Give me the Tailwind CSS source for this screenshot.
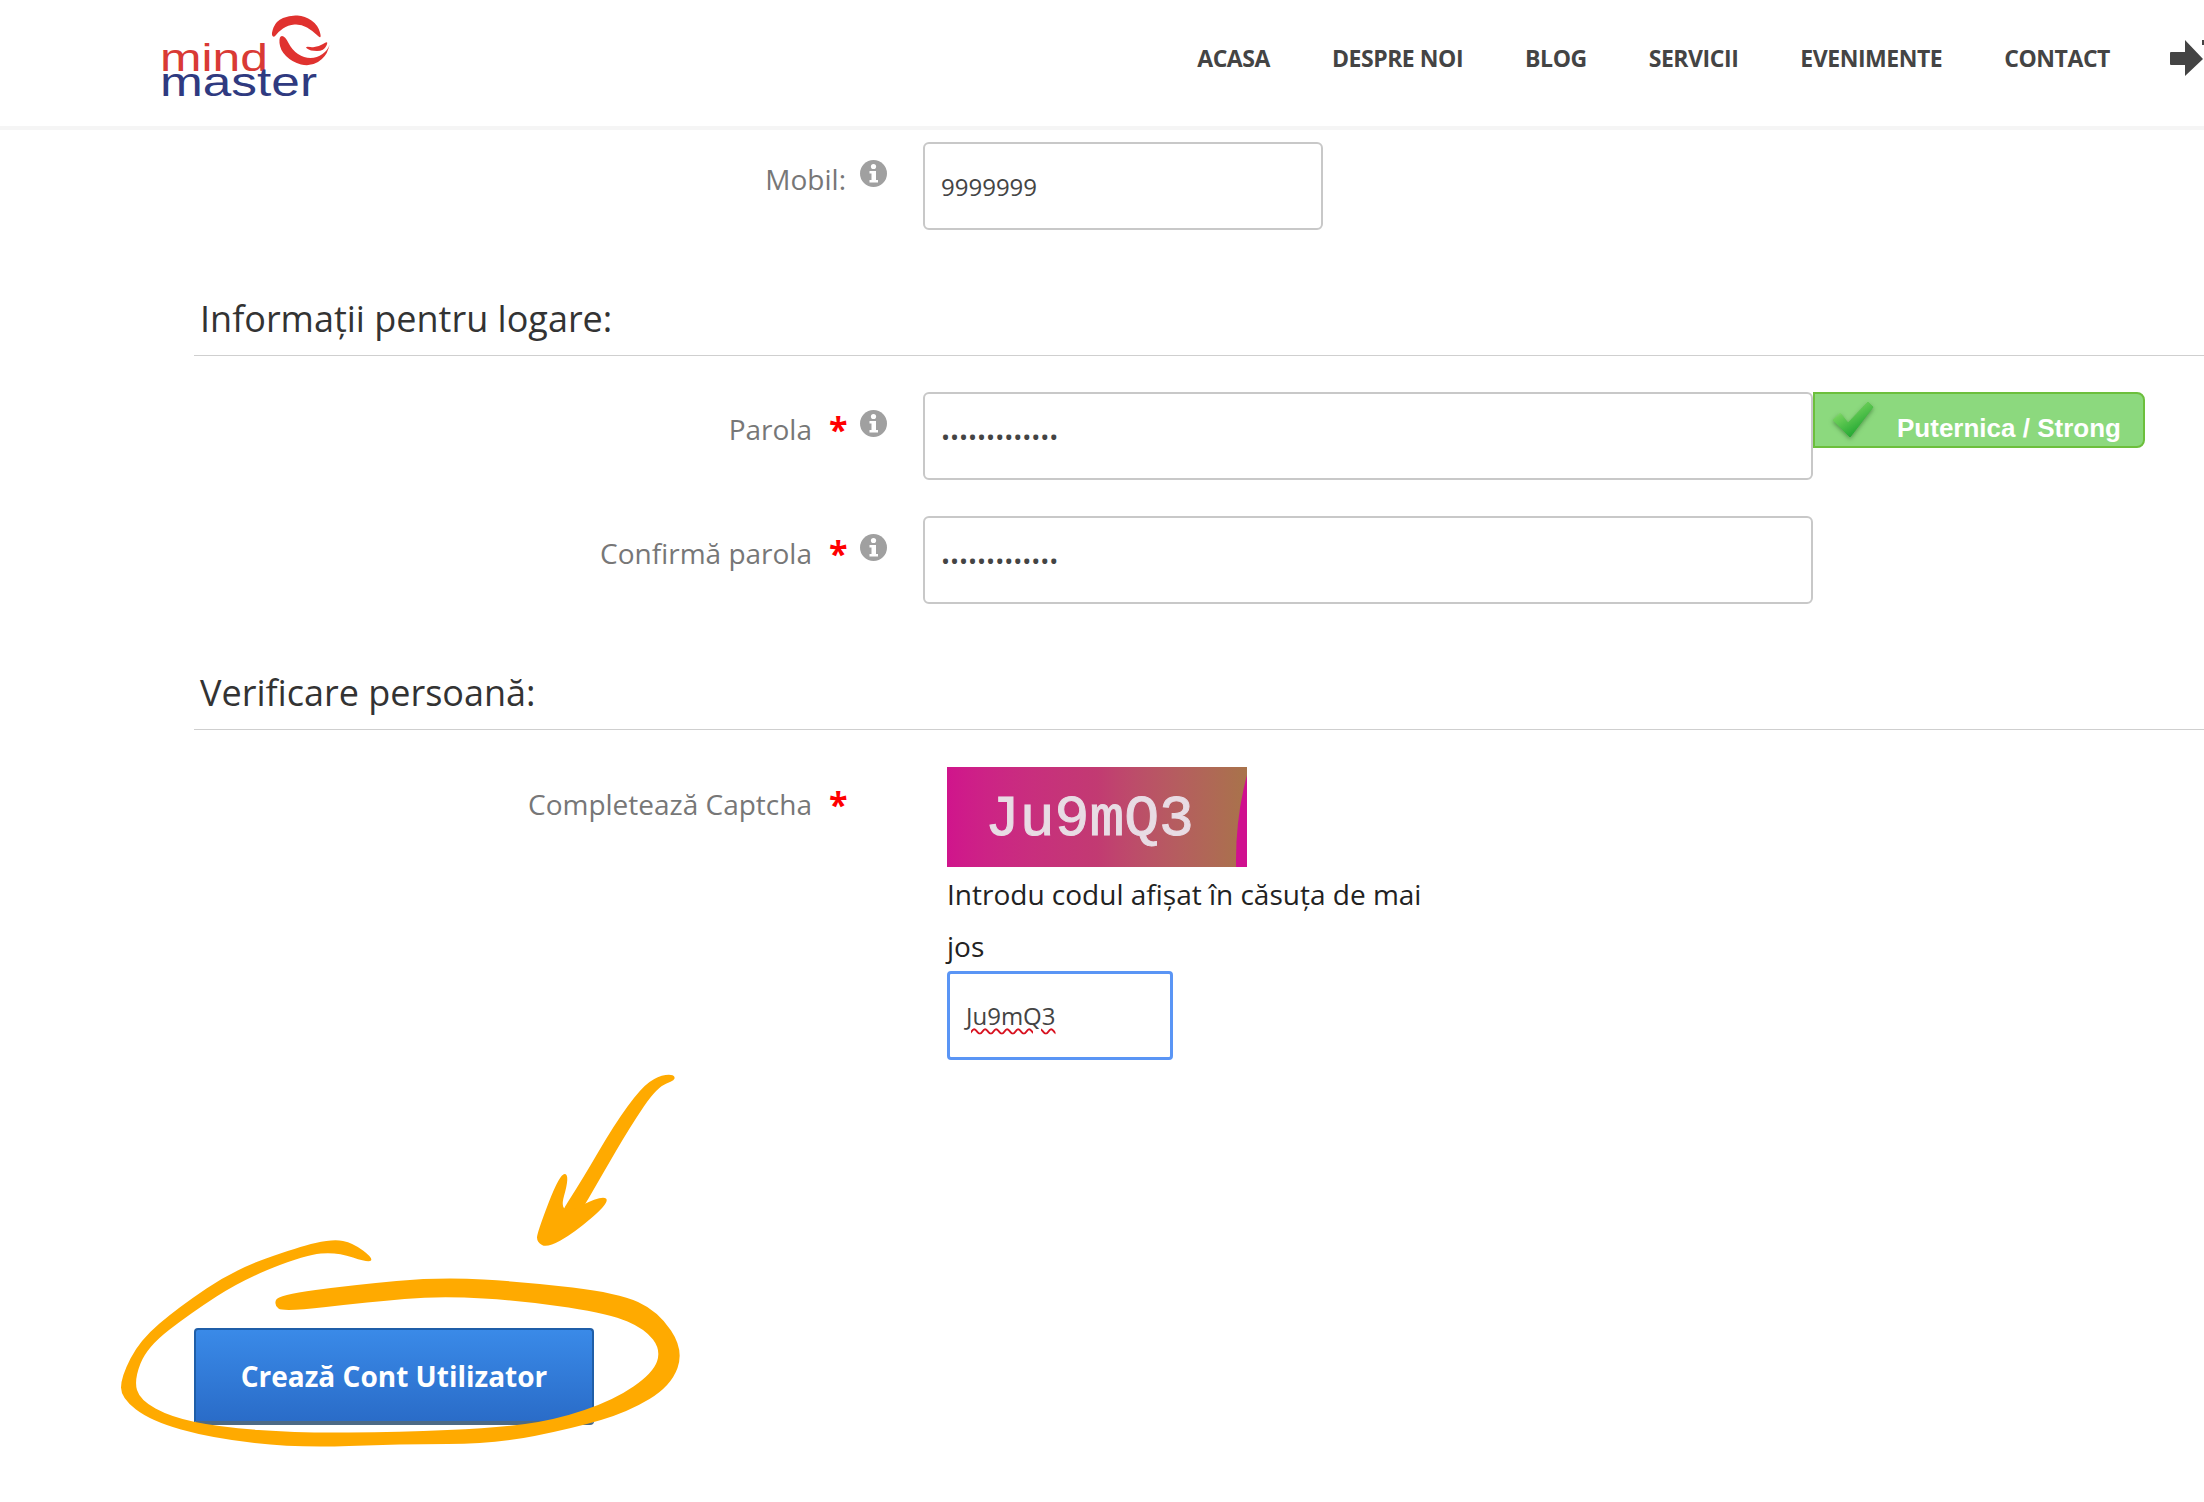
<!DOCTYPE html>
<html lang="ro">
<head>
    <meta charset="UTF-8">
    <title>Creare cont - Mind Master</title>
    <script src="https://cdn.jsdelivr.net/npm/@tailwindcss/browser@4"></script>
</head>
<body class="relative w-[2204px] h-[1502px] overflow-hidden bg-white font-['Open_Sans',sans-serif]">
    <!-- header -->
    <header class="flex items-center justify-between h-[130px] border-b-4 border-[#f5f5f5] pb-[10px]">
        <svg class="ml-[160px] mt-[8px]" width="180" height="100" viewBox="0 0 180 100">
            <text x="0" y="58.5" font-family="Liberation Sans" font-size="39" fill="#d93a35" textLength="108" lengthAdjust="spacingAndGlyphs">mind</text>
            <text x="0" y="83.5" font-family="Liberation Sans" font-size="40" fill="#2f3a80" textLength="157" lengthAdjust="spacingAndGlyphs">master</text>
            <g fill="#e0322f">
                <path class="blob" data-pts="111,22 116,9 130,3 145,4 158,13 162,28 153,19 141,12 128,13 118,20 114,26"/>
                <path class="blob" data-pts="119,24 120,38 132,50 150,55 166,45 171,28 168,38 157,46 144,46 132,38 125,24"/>
                <path class="blob" data-pts="144,34 157,36 169,28 164,39 150,39"/>
            </g>
        </svg>
        <nav class="flex items-center gap-[62px] text-[23px] font-bold tracking-[-0.45px] text-[#444]">
            <a href="#">ACASA</a>
            <a href="#">DESPRE NOI</a>
            <a href="#">BLOG</a>
            <a href="#">SERVICII</a>
            <a href="#">EVENIMENTE</a>
            <a href="#">CONTACT</a>
            <svg class="ml-[-2px]" width="34" height="38" viewBox="0 0 34 38">
                <path d="M1 13Q0 13 0 14V25Q0 26 1 26H15V37L33 20L15 1V13Z" fill="#444"/>
                <path d="M32 1H34V6H32Z" fill="#444"/>
            </svg>
        </nav>
    </header>

    <main>
        <!-- mobil -->
        <div class="flex items-start mt-[12px]">
            <div class="flex justify-end items-start w-[887px] pt-[17px] text-[28px] leading-[40px] text-[#777]">
                <span>Mobil:</span>
                <svg class="ml-[14px] mt-[1px]" width="27" height="27" viewBox="0 0 27 27">
                    <circle cx="13.5" cy="13.5" r="13.5" fill="#a0a0a0"/>
                    <circle cx="13.5" cy="6.5" r="2.6" fill="#fff"/>
                    <path d="M9.5 11H16V20H18V22.5H9.5V20H11.5V13.5H9.5Z" fill="#fff"/>
                </svg>
            </div>
            <input type="text" value="9999999" readonly class="ml-[36px] w-[400px] h-[88px] px-[16px] border-[2.5px] border-[#c8c8c8] rounded-[6px] text-[24px] text-[#444] outline-none">
        </div>

        <h3 class="ml-[194px] mt-[64px] pl-[6px] pb-[11px] border-b border-[#cfcfcf] text-[36px] leading-[50px] text-[#333]">Informaţii pentru logare:</h3>

        <!-- parola -->
        <div class="flex items-start mt-[36px]">
            <div class="flex justify-end items-start w-[887px] pt-[17px] text-[28px] leading-[40px] text-[#777]">
                <span>Parola</span>
                <span class="ml-[17px] mr-[1px] w-[16px] font-bold text-[34px] leading-[40px] text-[#f00]">*</span>
                <svg class="ml-[14px] mt-[1px]" width="27" height="27" viewBox="0 0 27 27">
                    <circle cx="13.5" cy="13.5" r="13.5" fill="#a0a0a0"/>
                    <circle cx="13.5" cy="6.5" r="2.6" fill="#fff"/>
                    <path d="M9.5 11H16V20H18V22.5H9.5V20H11.5V13.5H9.5Z" fill="#fff"/>
                </svg>
            </div>
            <input type="password" value="1234567890123" readonly class="ml-[36px] w-[890px] h-[88px] px-[16px] border-[2.5px] border-[#c8c8c8] rounded-[6px] text-[24px] text-[#444] outline-none">
            <div class="flex items-start w-[332px] h-[56px] bg-[#8cd97e] border-2 border-[#6cbf3c] rounded-r-[8px] font-['Liberation_Sans',sans-serif] font-bold text-[26px] text-white">
                <svg class="ml-[18px] mt-[8px] drop-shadow-[0_2px_2px_rgba(30,90,30,0.5)]" width="42" height="38" viewBox="0 0 42 38">
                    <defs>
                        <linearGradient id="chk" x1="0" y1="0" x2="0.7" y2="1">
                            <stop offset="0" stop-color="#d8f5c8"/>
                            <stop offset="0.35" stop-color="#6fd05a"/>
                            <stop offset="1" stop-color="#12a02a"/>
                        </linearGradient>
                    </defs>
                    <path d="M0 18L7 11L15 21L35 0L40 5L17 35Z" fill="url(#chk)" stroke="url(#chk)" stroke-linejoin="round"/>
                </svg>
                <span class="ml-[22px] mt-[19px] leading-[30px]">Puternica / Strong</span>
            </div>
        </div>

        <!-- confirma -->
        <div class="flex items-start mt-[36px]">
            <div class="flex justify-end items-start w-[887px] pt-[17px] text-[28px] leading-[40px] text-[#777]">
                <span>Confirmă parola</span>
                <span class="ml-[17px] mr-[1px] w-[16px] font-bold text-[34px] leading-[40px] text-[#f00]">*</span>
                <svg class="ml-[14px] mt-[1px]" width="27" height="27" viewBox="0 0 27 27">
                    <circle cx="13.5" cy="13.5" r="13.5" fill="#a0a0a0"/>
                    <circle cx="13.5" cy="6.5" r="2.6" fill="#fff"/>
                    <path d="M9.5 11H16V20H18V22.5H9.5V20H11.5V13.5H9.5Z" fill="#fff"/>
                </svg>
            </div>
            <input type="password" value="1234567890123" readonly class="ml-[36px] w-[890px] h-[88px] px-[16px] border-[2.5px] border-[#c8c8c8] rounded-[6px] text-[24px] text-[#444] outline-none">
        </div>

        <h3 class="ml-[194px] mt-[64px] pl-[6px] pb-[11px] border-b border-[#cfcfcf] text-[36px] leading-[50px] text-[#333]">Verificare persoană:</h3>

        <!-- captcha -->
        <div class="flex items-start mt-[37px]">
            <div class="flex justify-end items-start w-[846px] pt-[17px] text-[28px] leading-[40px] text-[#777]">
                <span>Completează Captcha</span>
                <span class="ml-[17px] mr-[1px] w-[16px] font-bold text-[34px] leading-[40px] text-[#f00]">*</span>
            </div>
            <div class="ml-[101px] w-[490px]">
                <div class="relative w-[300px] h-[100px] overflow-hidden bg-linear-to-r from-[#d0148c] via-[#c23a72] to-[#a8734a]">
                    <span class="block pl-[38px] pt-[3px] font-['Liberation_Mono',monospace] text-[58px] leading-[100px] text-[#e8dce4] [-webkit-text-stroke:1px_#e8dce4]">Ju9mQ3</span>
                    <div class="absolute left-[289px] top-[-93px] w-[200px] h-[372px] rounded-[50%] bg-[#d0108f]"></div>
                </div>
                <p class="mt-[1px] text-[28px] leading-[52px] text-[#222]">Introdu codul afişat în căsuţa de mai jos</p>
                <div class="mt-[-1px] flex items-center w-[226px] h-[89px] px-[16px] border-[3px] border-[#5a95f5] rounded-[4px] text-[24px] text-[#444]">
                    <span class="underline decoration-wavy decoration-[#d8111f] decoration-[1.5px] underline-offset-[3px]">Ju9mQ3</span>
                </div>
            </div>
        </div>

        <button class="block ml-[194px] mt-[268px] w-[400px] h-[97px] bg-linear-to-b from-[#3a8ae8] to-[#2a6cc8] border-2 border-[#1f5ea8] border-b-4 border-b-[#4d6a85] rounded-[4px] text-[28px] font-bold text-white">Crează Cont Utilizator</button>
    </main>

    <!-- hand drawn annotation -->
    <svg class="absolute inset-0 pointer-events-none" width="2204" height="1502" viewBox="0 0 2204 1502" fill="#ffaa00">
        <path class="blob" data-pts="278,1295 353,1285 440,1277 527,1282 618,1293 658,1311 684,1350 671,1386 628,1412 574,1428 495,1444 400,1444 298,1448 211,1438 151,1421 121,1398 121,1377 140,1340 179,1307 234,1270 298,1247 333,1239 353,1243 373,1258 369,1263 337,1252 305,1255 242,1280 191,1313 147,1347 134,1380 140,1400 171,1417 219,1427 298,1433 400,1432 495,1428 555,1420 614,1400 653,1373 661,1350 645,1329 610,1314 527,1301 440,1296 369,1302 283,1312 274,1305"/>
        <path class="blob" data-pts="673,1074 676,1080 657,1087 630,1127 602,1175 575,1222 555,1222 582,1180 614,1125 641,1088 658,1076"/>
        <path class="blob" data-pts="560,1173 570,1175 558,1217 602,1195 610,1202 574,1233 547,1248 537,1242 537,1233"/>
    </svg>

    <script>
        // smooth closed outline through the points, for the swirl and the marker strokes
        document.querySelectorAll('.blob').forEach(el => {
            let pts = el.dataset.pts.split(' ').map(p => p.split(',').map(Number));
            let mid = (a, b) => [(a[0] + b[0]) / 2, (a[1] + b[1]) / 2];
            let start = mid(pts[pts.length - 1], pts[0]);
            let d = 'M' + start.join(' ');
            pts.forEach((p, i) => {
                let m = mid(p, pts[(i + 1) % pts.length]);
                d += 'Q' + p.join(' ') + ' ' + m.join(' ');
            });
            el.setAttribute('d', d + 'Z');
        });
    </script>
</body>
</html>
